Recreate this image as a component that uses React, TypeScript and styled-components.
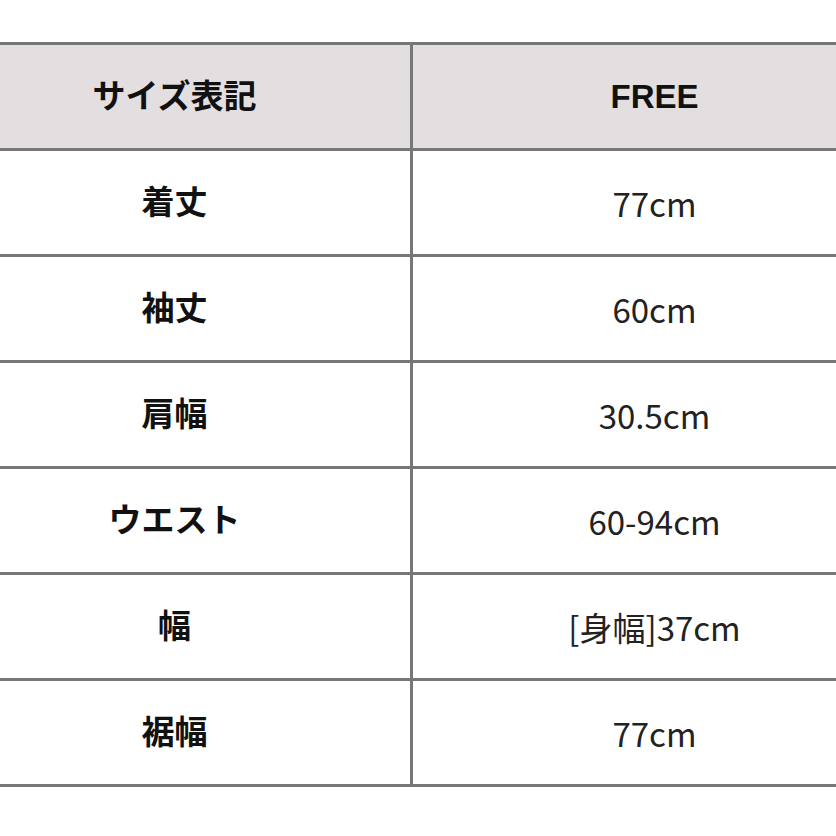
import React from "react";
import styled, { createGlobalStyle } from "styled-components";

const GlobalStyle = createGlobalStyle`
  html, body {
    margin: 0;
    padding: 0;
    background: #ffffff;
    overflow: hidden;
  }
  body {
    font-family: "Noto Sans CJK JP", "Noto Sans", sans-serif;
    color: #141414;
  }
`;

const Page = styled.div`
  width: 836px;
  height: 836px;
  overflow: hidden;
  padding-top: 42px;
  box-sizing: border-box;
`;

const SizeTable = styled.table`
  margin-left: -64px;
  width: 963px;
  border-collapse: collapse;
  table-layout: fixed;
`;

const LabelCol = styled.col`
  width: 474px;
`;

const Row = styled.tr`
  height: 106px;
`;

const Cell = styled.td<{ $head?: boolean; $label?: boolean }>`
  border: 3px solid #777777;
  background: ${({ $head }) => ($head ? "#e3dfe0" : "#ffffff")};
  text-align: center;
  vertical-align: middle;
  padding: 0 0 ${({ $head, $label }) => ($head || $label ? "5px" : "0")};
  font-size: 33px;
  font-weight: ${({ $head, $label }) => ($head || $label ? 700 : 400)};
  color: ${({ $head, $label }) => ($head || $label ? "#111111" : "#222222")};
`;

const Latin = styled.span`
  font-family: "Liberation Sans", Arial, sans-serif;
  font-size: 33px;
`;

const rows: [string, string][] = [
  ["着丈", "77cm"],
  ["袖丈", "60cm"],
  ["肩幅", "30.5cm"],
  ["ウエスト", "60-94cm"],
  ["幅", "[身幅]37cm"],
  ["裾幅", "77cm"],
];

export default function App() {
  return (
    <>
      <GlobalStyle />
      <Page>
        <SizeTable>
          <colgroup>
            <LabelCol />
            <col />
          </colgroup>
          <tbody>
            <Row>
              <Cell $head>サイズ表記</Cell>
              <Cell $head>
                <Latin>FREE</Latin>
              </Cell>
            </Row>
            {rows.map(([label, value]) => (
              <Row key={label}>
                <Cell $label>{label}</Cell>
                <Cell>{value}</Cell>
              </Row>
            ))}
          </tbody>
        </SizeTable>
      </Page>
    </>
  );
}
